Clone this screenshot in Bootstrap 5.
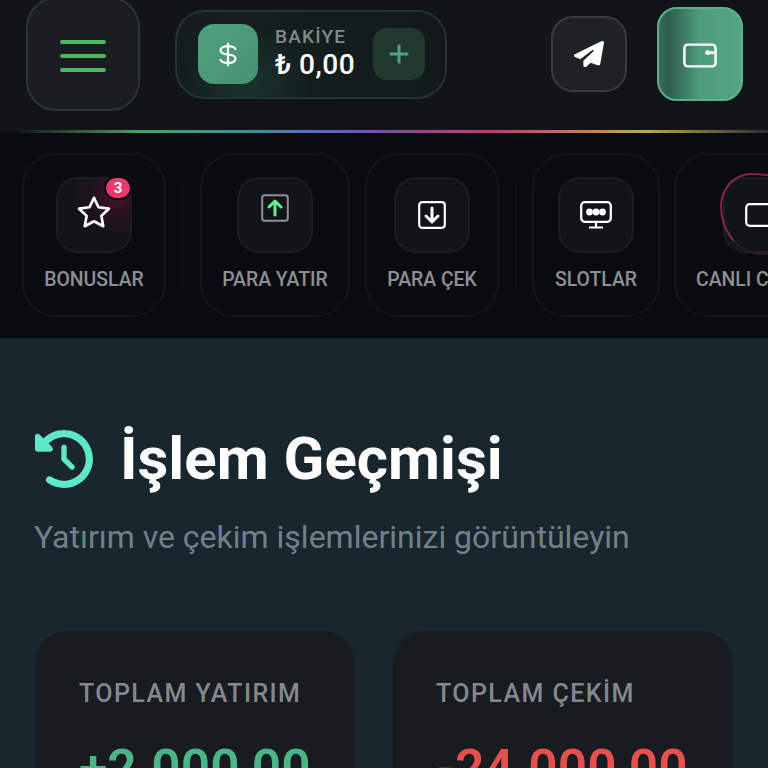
<!DOCTYPE html>
<html lang="tr">
<head>
    <meta charset="UTF-8">
    <meta name="viewport" content="width=device-width, initial-scale=1.0">
    <title>İşlem Geçmişi</title>
    <link href="https://cdn.jsdelivr.net/npm/bootstrap@5.3.0/dist/css/bootstrap.min.css" rel="stylesheet">
    <style>
        html, body { height: 768px; overflow: hidden; }
        body { background: #1a262e; font-family: Roboto, "Liberation Sans", sans-serif; }

        /* top bar */
        .top-bar { height: 130px; padding: 0 25px 22px 26px; background: #111418; }
        .menu-btn { width: 114px; height: 114px; padding-top: 4px; flex: none; gap: 10px; border: 2px solid #2f3438; border-radius: 30px; background: #1a1e22; }
        .menu-btn span { display: block; width: 46px; height: 4px; border-radius: 2px; background: #4fb85f; }
        .balance-pill { width: 272px; height: 89px; margin-left: 35px; padding: 0 20px 0 21px; flex: none; border: 2px solid #263431; border-radius: 30px;
            background: radial-gradient(circle at 70px 72px, #1b332d 0, #141e1e 30%, #12181a 100%); }
        .dollar-tile { width: 60px; height: 60px; flex: none; border-radius: 16px; background: linear-gradient(135deg, #50a17f, #479273); }
        .balance-text { margin-left: 17px; }
        .balance-label { font-size: 19px; line-height: 22px; font-weight: 500; color: #7f8a8c; letter-spacing: 1.2px; }
        .balance-value { font-size: 28px; line-height: 34px; font-weight: 500; color: #fff; letter-spacing: .5px; white-space: nowrap; }
        .plus-tile { width: 52px; height: 52px; flex: none; margin-left: auto; border-radius: 14px; background: #21382f; }
        .tg-btn { width: 76px; height: 76px; flex: none; border: 2px solid #383c41; border-radius: 22px; background: #1e2126; }
        .wallet-btn { width: 86px; height: 94px; padding-top: 3px; flex: none; margin-left: 30px; border: 2px solid #5fb08d; border-radius: 20px;
            background: linear-gradient(90deg, #3a6b56 0, #2f5f4c 12%, #4f9c7c 50%, #54a584 100%); }
        .rainbow-line { height: 3px; background: linear-gradient(90deg, #101418 2%, #4f9d60 18%, #4a80b0 38%, #7a50a0 50%, #b8406a 64%, #c0a850 84%, #2a2c2c 100%); }

        /* quick links */
        .quick-strip { height: 205px; padding: 20px 0 21px 22px; background: #0a0b10; overflow: hidden; }
        .quick-card { height: 164px; flex: none; padding-top: 22px; border: 2px solid #131519; border-radius: 34px; }
        .qc-bonus { width: 144px; }
        .qc-deposit { width: 150px; }
        .qc-withdraw { width: 134px; margin-left: 15px; }
        .qc-slots { width: 128px; }
        .qc-live { width: 174px; margin-left: 14px; }
        .quick-sep { width: 2px; height: 104px; margin: 30px 16px 0 16px; flex: none; background: #0e1014; }
        .quick-sep-b { margin-right: 15px; }
        .quick-tile { position: relative; width: 76px; height: 76px; border: 2px solid #1c1e23; border-radius: 22px; background: #131419; }
        .quick-label { margin-top: 15px; font-size: 19.4px; line-height: 24px; font-weight: 500; color: #8e9095; white-space: nowrap; }
        .star-glow { background: radial-gradient(circle at 60px 14px, #4e162b 0, #26131d 26%, #131419 52%); }
        .star-icon { margin-bottom: 8px; }
        .up-icon { margin-bottom: 14px; }
        .count-pill { position: absolute; top: -3px; right: -2px; width: 28px; height: 24px; border: 2px solid #0b0c10; border-radius: 12px;
            background: #e83a6c; color: #fff; font-size: 15px; line-height: 20px; font-weight: 700; text-align: center; }
        .blob-tile::before { content: ""; position: absolute; inset: -6px -6px -4px -5px; border: 2px solid #83264f; border-bottom-color: #2a1a24;
            border-radius: 38% 62% 50% 50% / 40% 30% 50% 60%; }

        /* page head */
        .page-head { padding: 83px 35px 0 35px; }
        .history-icon { width: 58px; height: 58px; flex: none; fill: #5de8c8; }
        .page-title { margin: 0 0 0 27px; font-size: 60px; line-height: 76px; font-weight: 700; color: #fff; white-space: nowrap; }
        .page-sub { margin: 20px 0 0 -1px; font-size: 32px; line-height: 40px; color: #748088; white-space: nowrap; }

        /* totals */
        .totals { margin: 74px 35px 0 35px; gap: 38px; }
        .total-box { height: 220px; padding: 47px 0 0 44px; flex: none; border-radius: 32px; background: #181c21; }
        .box-a { width: 320px; }
        .box-b { width: 340px; padding-left: 43px; }
        .total-label { font-size: 25px; line-height: 32px; font-weight: 500; letter-spacing: 1.43px; color: #85888e; white-space: nowrap; }
        .total-value { margin-top: 31px; font-size: 51.500px; line-height: 56px; font-weight: 600; white-space: nowrap; }
        .val-in { color: #4ab687; }
        .val-out { color: #e5504d; }
    </style>
</head>
<body>
    <header class="top-bar d-flex align-items-center">
        <div class="menu-btn d-flex flex-column align-items-center justify-content-center">
            <span></span><span></span><span></span>
        </div>
        <div class="balance-pill d-flex align-items-center">
            <div class="dollar-tile d-flex align-items-center justify-content-center">
                <svg width="20" height="27" viewBox="0 0 24 30" fill="none" stroke="#fff" stroke-width="2.600" stroke-linecap="round"><path d="M12 2v26M21 8.500c-1-2.500-4-3.500-9-3.500-4.500 0-9 1.800-9 5s4 4.600 9 5 9 1.800 9 5-4 5-9 5-8.200-1.200-9-3.500"/></svg>
            </div>
            <div class="balance-text">
                <div class="balance-label">BAKİYE</div>
                <div class="balance-value">₺ 0,00</div>
            </div>
            <div class="plus-tile d-flex align-items-center justify-content-center">
                <svg width="20" height="20" viewBox="0 0 20 20" stroke="#4fa582" stroke-width="3" stroke-linecap="round"><path d="M10 2v16M2 10h16"/></svg>
            </div>
        </div>
        <div class="tg-btn ms-auto d-flex align-items-center justify-content-center">
            <svg width="30" height="26" viewBox="0 0 512 512" preserveAspectRatio="none" fill="#fff"><path d="M498.100 5.600c10.100 7 15.400 19.100 13.500 31.200l-64 416c-1.500 9.700-7.400 18.200-16 23s-18.900 5.400-28 1.600L284 427.700l-68.500 74.100c-8.900 9.700-22.900 12.900-35.200 8.100S160 493.200 160 480V396.400c0-4 1.500-7.800 4.200-10.700L331.800 202.800c5.800-6.300 5.600-16-.4-22s-15.700-6.400-22-.7L106 360.800 17.700 316.600C7.100 311.300 .3 300.700 0 288.900s5.900-22.800 16.100-28.700l448-256c10.700-6.100 23.900-5.500 34 1.400z"/></svg>
        </div>
        <div class="wallet-btn d-flex align-items-center justify-content-center">
            <svg width="34" height="25" viewBox="0 0 36 26" fill="none" stroke="#fff" stroke-width="2.600"><rect x="1.500" y="1.500" width="33" height="23" rx="3.500"/><path d="M26 10h7" stroke-width="3"/><circle cx="26" cy="10" r="2.500" fill="#fff" stroke="none"/></svg>
        </div>
    </header>
    <div class="rainbow-line"></div>

    <nav class="quick-strip d-flex">
        <div class="quick-card qc-bonus d-flex flex-column align-items-center">
            <div class="quick-tile star-glow d-flex align-items-center justify-content-center">
                <svg class="star-icon" width="34" height="33" viewBox="0 0 36 34" fill="none" stroke="#fff" stroke-width="2.800" stroke-linejoin="round"><path d="M18 2.500l4.800 10 11 1.500-8 7.600 2 11-9.800-5.300-9.800 5.300 2-11-8-7.600 11-1.500z"/></svg>
                <span class="count-pill">3</span>
            </div>
            <div class="quick-label">BONUSLAR</div>
        </div>
        <div class="quick-sep"></div>
        <div class="quick-card qc-deposit d-flex flex-column align-items-center">
            <div class="quick-tile d-flex align-items-center justify-content-center">
                <svg class="up-icon" width="28" height="28" viewBox="0 0 28 28" fill="none"><rect x="1.200" y="1.200" width="25.600" height="25.600" rx="2.500" stroke="#8d9096" stroke-width="2"/><path d="M14 21V8M8 13l6-6 6 6" stroke="#5ff08a" stroke-width="3" stroke-linecap="round" stroke-linejoin="round"/></svg>
            </div>
            <div class="quick-label">PARA YATIR</div>
        </div>
        <div class="quick-card qc-withdraw d-flex flex-column align-items-center">
            <div class="quick-tile d-flex align-items-center justify-content-center">
                <svg width="28" height="28" viewBox="0 0 28 28" fill="none" stroke="#fff"><rect x="1.200" y="1.200" width="25.600" height="25.600" rx="3" stroke-width="2.200"/><path d="M14 7v13M8 15l6 6 6-6" stroke-width="3" stroke-linecap="round" stroke-linejoin="round"/></svg>
            </div>
            <div class="quick-label">PARA ÇEK</div>
        </div>
        <div class="quick-sep quick-sep-b"></div>
        <div class="quick-card qc-slots d-flex flex-column align-items-center">
            <div class="quick-tile d-flex align-items-center justify-content-center">
                <svg width="32" height="28" viewBox="0 0 32 28" fill="none" stroke="#fff"><rect x="1.200" y="1.200" width="29.600" height="19.600" rx="3.500" stroke-width="2.200"/><path d="M16 21v5M9 26.500h14" stroke-width="2.200"/><g fill="#fff" stroke="none"><circle cx="9.500" cy="11" r="3.400"/><circle cx="16" cy="11" r="3.400"/><circle cx="22.500" cy="11" r="3.400"/></g></svg>
            </div>
            <div class="quick-label">SLOTLAR</div>
        </div>
        <div class="quick-card qc-live d-flex flex-column align-items-center">
            <div class="quick-tile blob-tile d-flex align-items-center justify-content-center">
                <svg width="32" height="24" viewBox="0 0 32 24" fill="none" stroke="#fff" stroke-width="2.200"><rect x="1.200" y="1.200" width="29.600" height="21.600" rx="3.500"/></svg>
            </div>
            <div class="quick-label">CANLI CASINO</div>
        </div>
    </nav>

    <section class="page-head">
        <div class="d-flex align-items-center">
            <svg class="history-icon" viewBox="0 0 512 512"><path d="M75 75L41 41C25.900 25.900 0 36.600 0 57.900V168c0 13.300 10.700 24 24 24H134.100c21.400 0 32.100-25.900 17-41l-30.800-30.800C155 85.500 203 64 256 64c106 0 192 86 192 192s-86 192-192 192c-40.800 0-78.600-12.700-109.700-34.400c-14.500-10.100-34.400-6.600-44.600 7.900s-6.600 34.400 7.900 44.600C151.200 495 201.700 512 256 512c141.400 0 256-114.600 256-256S397.400 0 256 0C185.300 0 121.300 28.700 75 75zm181 53c-13.300 0-24 10.700-24 24V256c0 6.400 2.500 12.500 7 17l72 72c9.400 9.400 24.600 9.400 33.900 0s9.400-24.600 0-33.900l-65-65V152c0-13.300-10.700-24-24-24z"/></svg>
            <h1 class="page-title">İşlem Geçmişi</h1>
        </div>
        <p class="page-sub">Yatırım ve çekim işlemlerinizi görüntüleyin</p>
    </section>

    <section class="totals d-flex">
        <div class="total-box box-a">
            <div class="total-label">TOPLAM YATIRIM</div>
            <div class="total-value val-in">+2.000,00</div>
        </div>
        <div class="total-box box-b">
            <div class="total-label">TOPLAM ÇEKİM</div>
            <div class="total-value val-out">-24.000,00</div>
        </div>
    </section>
</body>
</html>
